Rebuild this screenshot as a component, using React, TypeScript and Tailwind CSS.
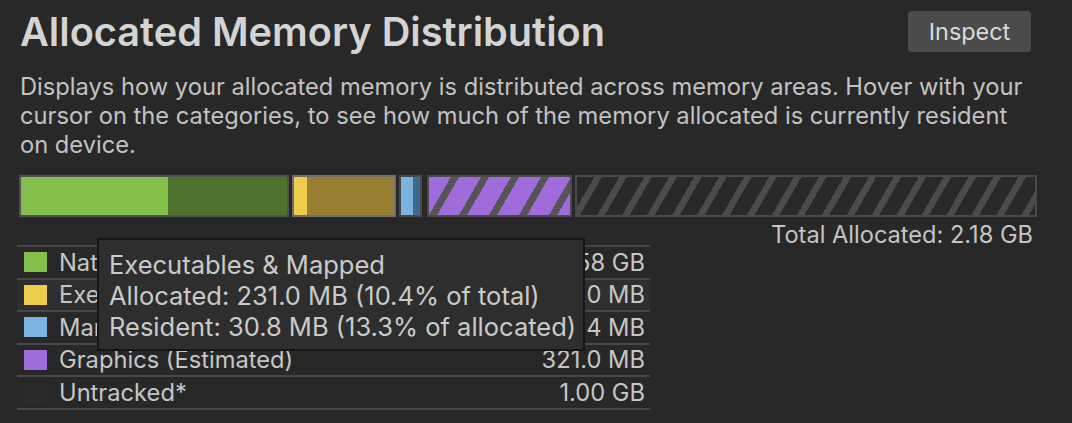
export default function App() {
  const rows = [
    { name: "Native", value: "0.58 GB", color: "bg-[#84bf4b]", hover: false },
    { name: "Executables & Mapped", value: "231.0 MB", color: "bg-[#eecd4d]", hover: true },
    { name: "Managed", value: "51.4 MB", color: "bg-[#7ab2e0]", hover: false },
    { name: "Graphics (Estimated)", value: "321.0 MB", color: "bg-[#a06cdc]", hover: false },
    { name: "Untracked*", value: "1.00 GB", color: "bg-[#2b2b2b]", hover: false },
  ];
  return (
    <div className="relative w-[1072px] h-[423px] overflow-hidden bg-[#282828] font-['Inter','Noto_Sans',sans-serif] text-[#c4c4c4]">
      <div className="pl-[20px] pr-[41px] pt-[10px]">
        <div className="flex items-start justify-between">
          <h1 className="text-[39.7px] leading-[44px] font-semibold text-[#d4d4d4]">
            Allocated Memory Distribution
          </h1>
          <button className="mt-[1px] h-[41px] w-[123px] rounded-[4px] bg-[#4b4b4b] text-[23.4px] text-[#dadada]">
            Inspect
          </button>
        </div>
        <p className="mt-[18px] w-[1015px] text-[23.7px] leading-[29px] text-[#c2c2c2]">
          Displays how your allocated memory is distributed across memory areas. Hover with your cursor on the categories, to see how much of the memory allocated is currently resident on device.
        </p>
      </div>

      <div className="ml-[19px] mt-[16px] flex h-[42px] w-[1018px]">
        <div className="flex w-[270px] border-2 border-[#505050]">
          <div className="w-[147px] bg-[#84bf4b]" />
          <div className="flex-1 bg-[#4f722f]" />
        </div>
        <div className="ml-[3px] flex w-[104px] border-2 border-[#6e6e6e]">
          <div className="w-[13px] bg-[#eecd4d]" />
          <div className="flex-1 bg-[#997f32]" />
        </div>
        <div className="ml-[3px] flex w-[23px] border-2 border-[#4a4a4a]">
          <div className="w-[12px] bg-[#7ab2e0]" />
          <div className="flex-1 bg-[#3e6a91]" />
        </div>
        <div className="ml-[5px] w-[145px] border-2 border-[#4a4a4a] bg-[repeating-linear-gradient(120deg,#a06cdc_0px,#a06cdc_19px,#555555_19px,#555555_26px)]" />
        <div className="ml-[3px] w-[462px] border-2 border-[#4a4a4a] bg-[repeating-linear-gradient(120deg,#292929_0px,#292929_15px,#4b4b4b_15px,#4b4b4b_21.6px)]" />
      </div>

      <div className="mt-[8px] w-[1033px] h-[20px] text-right text-[23.6px] leading-[20px] text-[#c4c4c4]">
        Total Allocated: 2.18 GB
      </div>

      <div className="ml-[17px] w-[633px] border-t-2 border-[#474747]">
        {rows.map((r) => (
          <div
            key={r.name}
            className={`flex h-[32.6px] items-center border-b-2 border-[#474747] pl-[7px] pr-[5px] text-[23.7px] text-[#c6c6c6] ${r.hover ? "bg-[#2f2f2f]" : ""}`}
          >
            <div className={`h-[20px] w-[23px] ${r.color}`} />
            <div className="ml-[12px] flex-1">{r.name}</div>
            <div>{r.value}</div>
          </div>
        ))}
      </div>

      <div className="absolute left-[97px] top-[238px] h-[113px] w-[488px] border-2 border-[#161616] bg-[#2e2e2e] pl-[10px] pt-[9px] text-[25.5px] leading-[31px] text-[#cacaca]">
        <div>Executables &amp; Mapped</div>
        <div>Allocated: 231.0 MB (10.4% of total)</div>
        <div>Resident: 30.8 MB (13.3% of allocated)</div>
      </div>
    </div>
  );
}
